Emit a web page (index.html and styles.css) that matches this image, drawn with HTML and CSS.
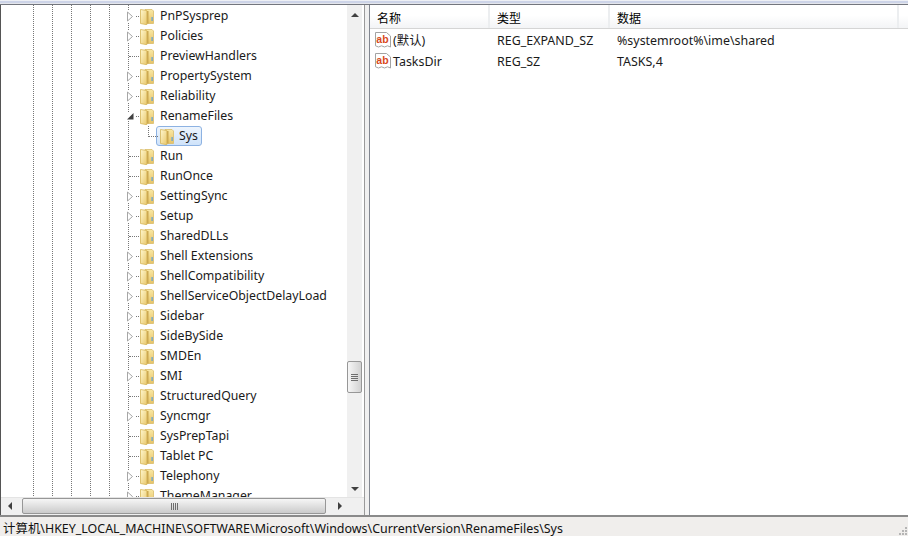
FILE: index.html
```html
<!DOCTYPE html>
<html lang="zh">
<head>
<meta charset="utf-8">
<title>Registry Editor</title>
<link rel="stylesheet" href="styles.css">
</head>
<body>
<svg width="0" height="0" class="defs">
  <defs>
    <linearGradient id="fb" x1="0" y1="0" x2="0" y2="1"><stop offset="0" stop-color="#f9e8a4"/><stop offset="1" stop-color="#e6c368"/></linearGradient>
    <linearGradient id="ff" x1="0" y1="0" x2="1" y2="1"><stop offset="0" stop-color="#fff8cf"/><stop offset="1" stop-color="#e9c86e"/></linearGradient>
    <symbol id="folder" viewBox="0 0 14 16">
      <path d="M5 .5H12L13.500 2V14.500H5z" fill="url(#fb)" stroke="#d9bd6a" stroke-width=".8"/>
      <rect x="7" y="2" width="1.500" height="12.500" fill="#c9a650"/>
      <path d="M.5 .5L6.800 1.500V15.700L.5 14.500z" fill="url(#ff)" stroke="#d6b558" stroke-width=".8"/>
      <rect x="11.500" y="8" width="1.200" height="4" fill="#5b9fd8"/>
    </symbol>
    <symbol id="expand" viewBox="0 0 9 11"><path d="M1.500 1l5 4.500-5 4.500z" fill="#fff" stroke="#a6a6a6"/></symbol>
    <symbol id="open" viewBox="0 0 9 9"><path d="M7.500 1v6.500h-6.500z" fill="#404040"/></symbol>
    <symbol id="ab" viewBox="0 0 16 16">
      <path d="M.5 .5h11l4 3.500v11l-3-1.200-3 1.200-3-1.200-3 1.200-3-1.200z" fill="#fff" stroke="#a3a3a3"/>
      <text x="1.300" y="11" class="abtext">ab</text>
    </symbol>
  </defs>
</svg>
<div class="topstrip"></div>
<main class="panes">
  <section class="treepane">
    <div class="treebody">
      <ul class="tree">
        <li class="row"><svg class="exp"><use href="#expand"/></svg><svg class="fold"><use href="#folder"/></svg><span class="label">PnPSysprep</span></li>
        <li class="row"><svg class="exp"><use href="#expand"/></svg><svg class="fold"><use href="#folder"/></svg><span class="label">Policies</span></li>
        <li class="row leaf"><svg class="fold"><use href="#folder"/></svg><span class="label">PreviewHandlers</span></li>
        <li class="row"><svg class="exp"><use href="#expand"/></svg><svg class="fold"><use href="#folder"/></svg><span class="label">PropertySystem</span></li>
        <li class="row"><svg class="exp"><use href="#expand"/></svg><svg class="fold"><use href="#folder"/></svg><span class="label">Reliability</span></li>
        <li class="row"><svg class="exp open"><use href="#open"/></svg><svg class="fold"><use href="#folder"/></svg><span class="label">RenameFiles</span></li>
        <li class="row child"><span class="sel"><svg class="fold"><use href="#folder"/></svg><span class="label">Sys</span></span></li>
        <li class="row leaf"><svg class="fold"><use href="#folder"/></svg><span class="label">Run</span></li>
        <li class="row leaf"><svg class="fold"><use href="#folder"/></svg><span class="label">RunOnce</span></li>
        <li class="row"><svg class="exp"><use href="#expand"/></svg><svg class="fold"><use href="#folder"/></svg><span class="label">SettingSync</span></li>
        <li class="row"><svg class="exp"><use href="#expand"/></svg><svg class="fold"><use href="#folder"/></svg><span class="label">Setup</span></li>
        <li class="row leaf"><svg class="fold"><use href="#folder"/></svg><span class="label">SharedDLLs</span></li>
        <li class="row"><svg class="exp"><use href="#expand"/></svg><svg class="fold"><use href="#folder"/></svg><span class="label">Shell Extensions</span></li>
        <li class="row"><svg class="exp"><use href="#expand"/></svg><svg class="fold"><use href="#folder"/></svg><span class="label">ShellCompatibility</span></li>
        <li class="row"><svg class="exp"><use href="#expand"/></svg><svg class="fold"><use href="#folder"/></svg><span class="label">ShellServiceObjectDelayLoad</span></li>
        <li class="row"><svg class="exp"><use href="#expand"/></svg><svg class="fold"><use href="#folder"/></svg><span class="label">Sidebar</span></li>
        <li class="row"><svg class="exp"><use href="#expand"/></svg><svg class="fold"><use href="#folder"/></svg><span class="label">SideBySide</span></li>
        <li class="row leaf"><svg class="fold"><use href="#folder"/></svg><span class="label">SMDEn</span></li>
        <li class="row"><svg class="exp"><use href="#expand"/></svg><svg class="fold"><use href="#folder"/></svg><span class="label">SMI</span></li>
        <li class="row leaf"><svg class="fold"><use href="#folder"/></svg><span class="label">StructuredQuery</span></li>
        <li class="row"><svg class="exp"><use href="#expand"/></svg><svg class="fold"><use href="#folder"/></svg><span class="label">Syncmgr</span></li>
        <li class="row leaf"><svg class="fold"><use href="#folder"/></svg><span class="label">SysPrepTapi</span></li>
        <li class="row leaf"><svg class="fold"><use href="#folder"/></svg><span class="label">Tablet PC</span></li>
        <li class="row"><svg class="exp"><use href="#expand"/></svg><svg class="fold"><use href="#folder"/></svg><span class="label">Telephony</span></li>
        <li class="row"><svg class="exp"><use href="#expand"/></svg><svg class="fold"><use href="#folder"/></svg><span class="label">ThemeManager</span></li>
      </ul>
      <div class="vscroll">
        <span class="arrow up"></span>
        <span class="vthumb"><i></i><i></i><i></i><i></i></span>
        <span class="arrow down"></span>
      </div>
    </div>
    <div class="hscroll">
      <span class="arrow left"></span>
      <span class="hthumb"><i></i><i></i><i></i><i></i></span>
      <span class="arrow right"></span>
    </div>
  </section>
  <section class="listpane">
    <div class="header">
      <span class="col c1">名称</span><span class="col c2">类型</span><span class="col c3">数据</span><span class="col c4"></span>
    </div>
    <div class="vrow"><span class="c1 name"><svg class="ab"><use href="#ab"/></svg>(默认)</span><span class="c2">REG_EXPAND_SZ</span><span class="c3">%systemroot%\ime\shared</span></div>
    <div class="vrow"><span class="c1 name"><svg class="ab"><use href="#ab"/></svg>TasksDir</span><span class="c2">REG_SZ</span><span class="c3">TASKS,4</span></div>
  </section>
</main>
<footer class="status">计算机\HKEY_LOCAL_MACHINE\SOFTWARE\Microsoft\Windows\CurrentVersion\RenameFiles\Sys</footer>
</body>
</html>
```
FILE: styles.css
```css
* { box-sizing: border-box; }
html, body { margin: 0; padding: 0; }
body {
  width: 908px; height: 536px; overflow: hidden;
  display: flex; flex-direction: column;
  background: #f0f0f0;
  font-family: "Noto Sans", "Noto Sans CJK SC", sans-serif;
  font-size: 12.450px;
  color: #000;
}
.defs { position: absolute; }
.abtext { font: bold 10.500px "Liberation Sans", sans-serif; fill: #d8491b; }
.topstrip {
  height: 5px; flex: none;
  background: linear-gradient(#eef0f5 0 1px, #cdd4e8 1px 3px, #e4e6ec 3px 3.500px);
  border-bottom: 1px solid #73767e;
}
.panes { flex: 1; display: flex; min-height: 0; background: #f0f0f0; }
.treepane {
  width: 365px; flex: none; display: flex; flex-direction: column;
  border-left: 1px solid #555; border-right: 1px solid #9a9a9a; background: #fff;
}
.treebody { flex: 1; display: flex; min-height: 0; }
.tree {
  flex: 1; margin: 0; padding: 1px 0 0; list-style: none; overflow: hidden; min-width: 0;
  font-size: 12.300px;
  background-image:
    linear-gradient(#777 50%, transparent 50%), linear-gradient(#777 50%, transparent 50%),
    linear-gradient(#777 50%, transparent 50%), linear-gradient(#777 50%, transparent 50%),
    linear-gradient(#777 50%, transparent 50%), linear-gradient(#777 50%, transparent 50%);
  background-size: 1px 2px;
  background-repeat: repeat-y;
  background-position: 32px 0, 51px 0, 70px 0, 89px 0, 108px 0, 127px 0;
}
.row {
  height: 20px; display: flex; align-items: center; position: relative;
  padding-left: 139px; white-space: nowrap;
}
.row::before {
  content: ""; position: absolute; left: 128px; top: 10px; width: 10px; height: 0;
  border-top: 1px dotted #777;
}
.exp { position: absolute; left: 125px; top: 5px; width: 9px; height: 11px; background: #fff; }
.exp.open { top: 6px; height: 9px; }
.fold { width: 14px; height: 16px; flex: none; position: relative; margin-top: 1px; }
.label { margin-left: 6px; margin-bottom: 1px; color: #1a1a1a; }
.child { padding-left: 155px; }
.child::before { left: 147px; width: 9px; height: 10px; top: 0; border-top: 0; border-left: 1px dotted #777; border-bottom: 1px dotted #777; }
.sel {
  display: flex; align-items: center; height: 20px; width: 46px;
  padding-left: 3px; border: 1px solid #8db2e2; border-radius: 3px;
  background: linear-gradient(#eef5fd, #cfe3fa);
}
.sel .label { margin-left: 5px; }
.vscroll {
  width: 17px; flex: none; background: #f0f0f0; display: flex; flex-direction: column;
  align-items: center; position: relative; justify-content: space-between;
  border-right: 2px solid #fff;
}
.arrow { display: block; width: 0; height: 0; }
.up { margin-top: 8px; border: 4px solid transparent; border-top: 0; border-bottom: 4px solid #404040; }
.down { margin-bottom: 6px; border: 4px solid transparent; border-bottom: 0; border-top: 4px solid #404040; }
.vthumb {
  position: absolute; top: 356px; left: 0; width: 15px; height: 32px;
  border: 1px solid #979797; border-radius: 2px;
  background: linear-gradient(90deg, #f6f6f6, #d2d2d2);
  display: flex; flex-direction: column; justify-content: center; align-items: center; gap: 1px;
}
.vthumb i { display: block; width: 7px; height: 1px; background: #6e6e6e; }
.hscroll {
  height: 18px; flex: none; background: #f0f0f0; display: flex; align-items: center;
  position: relative; padding: 0 20px 2px 0; border-top: 1px solid #e4e4e4;
}
.left { margin-left: 7px; border: 4px solid transparent; border-left: 0; border-right: 4px solid #404040; }
.right { position: absolute; right: 22px; border: 4px solid transparent; border-right: 0; border-left: 4px solid #404040; }
.hthumb {
  position: absolute; left: 21px; top: 0; width: 304px; height: 16px;
  border: 1px solid #979797; border-radius: 2px;
  background: linear-gradient(#f6f6f6, #cbcbcb);
  display: flex; justify-content: center; align-items: center; gap: 1px;
}
.hthumb i { display: block; width: 1px; height: 7px; background: #6e6e6e; }
.listpane {
  flex: 1; margin-left: 4px; background: #fff; border-left: 1px solid #828790; min-width: 0;
}
.header {
  height: 24px; display: flex; align-items: center; border-bottom: 1px solid #d5d5d5;
  background: linear-gradient(#fff, #fff 45%, #f3f4f6);
  font-family: "Noto Sans CJK SC", sans-serif;
  font-size: 12px;
}
.header .col { height: 100%; display: flex; align-items: center; border-right: 2px solid #eceef0; padding-top: 2px; }
.c1 { width: 120px; padding-left: 7px; flex: none; }
.c2 { width: 120px; padding-left: 7px; flex: none; }
.c3 { width: 289px; flex: none; padding-left: 7px; }
.c4 { flex: 1; }
.header .c4 { border-right: 0; }
.vrow { height: 21px; display: flex; align-items: center; white-space: nowrap; color: #1a1a1a; padding-top: 1px; }
.vrow .c1 { padding-left: 5px; display: flex; align-items: center; }
.ab { width: 16px; height: 16px; margin-right: 2px; flex: none; }
.status {
  height: 21px; flex: none; background: #f0eeec; border-top: 2px solid #8a8a8a;
  line-height: 23px; padding-left: 3px; white-space: nowrap; color: #111; position: relative;
}
.status::after {
  content: ""; position: absolute; right: 1px; bottom: 1px; width: 2px; height: 2px; background: #b5b5b5;
  box-shadow: -3px 0 #b5b5b5, -6px 0 #b5b5b5, 0 -3px #b5b5b5, 0 -6px #b5b5b5, -3px -3px #b5b5b5;
}
```
